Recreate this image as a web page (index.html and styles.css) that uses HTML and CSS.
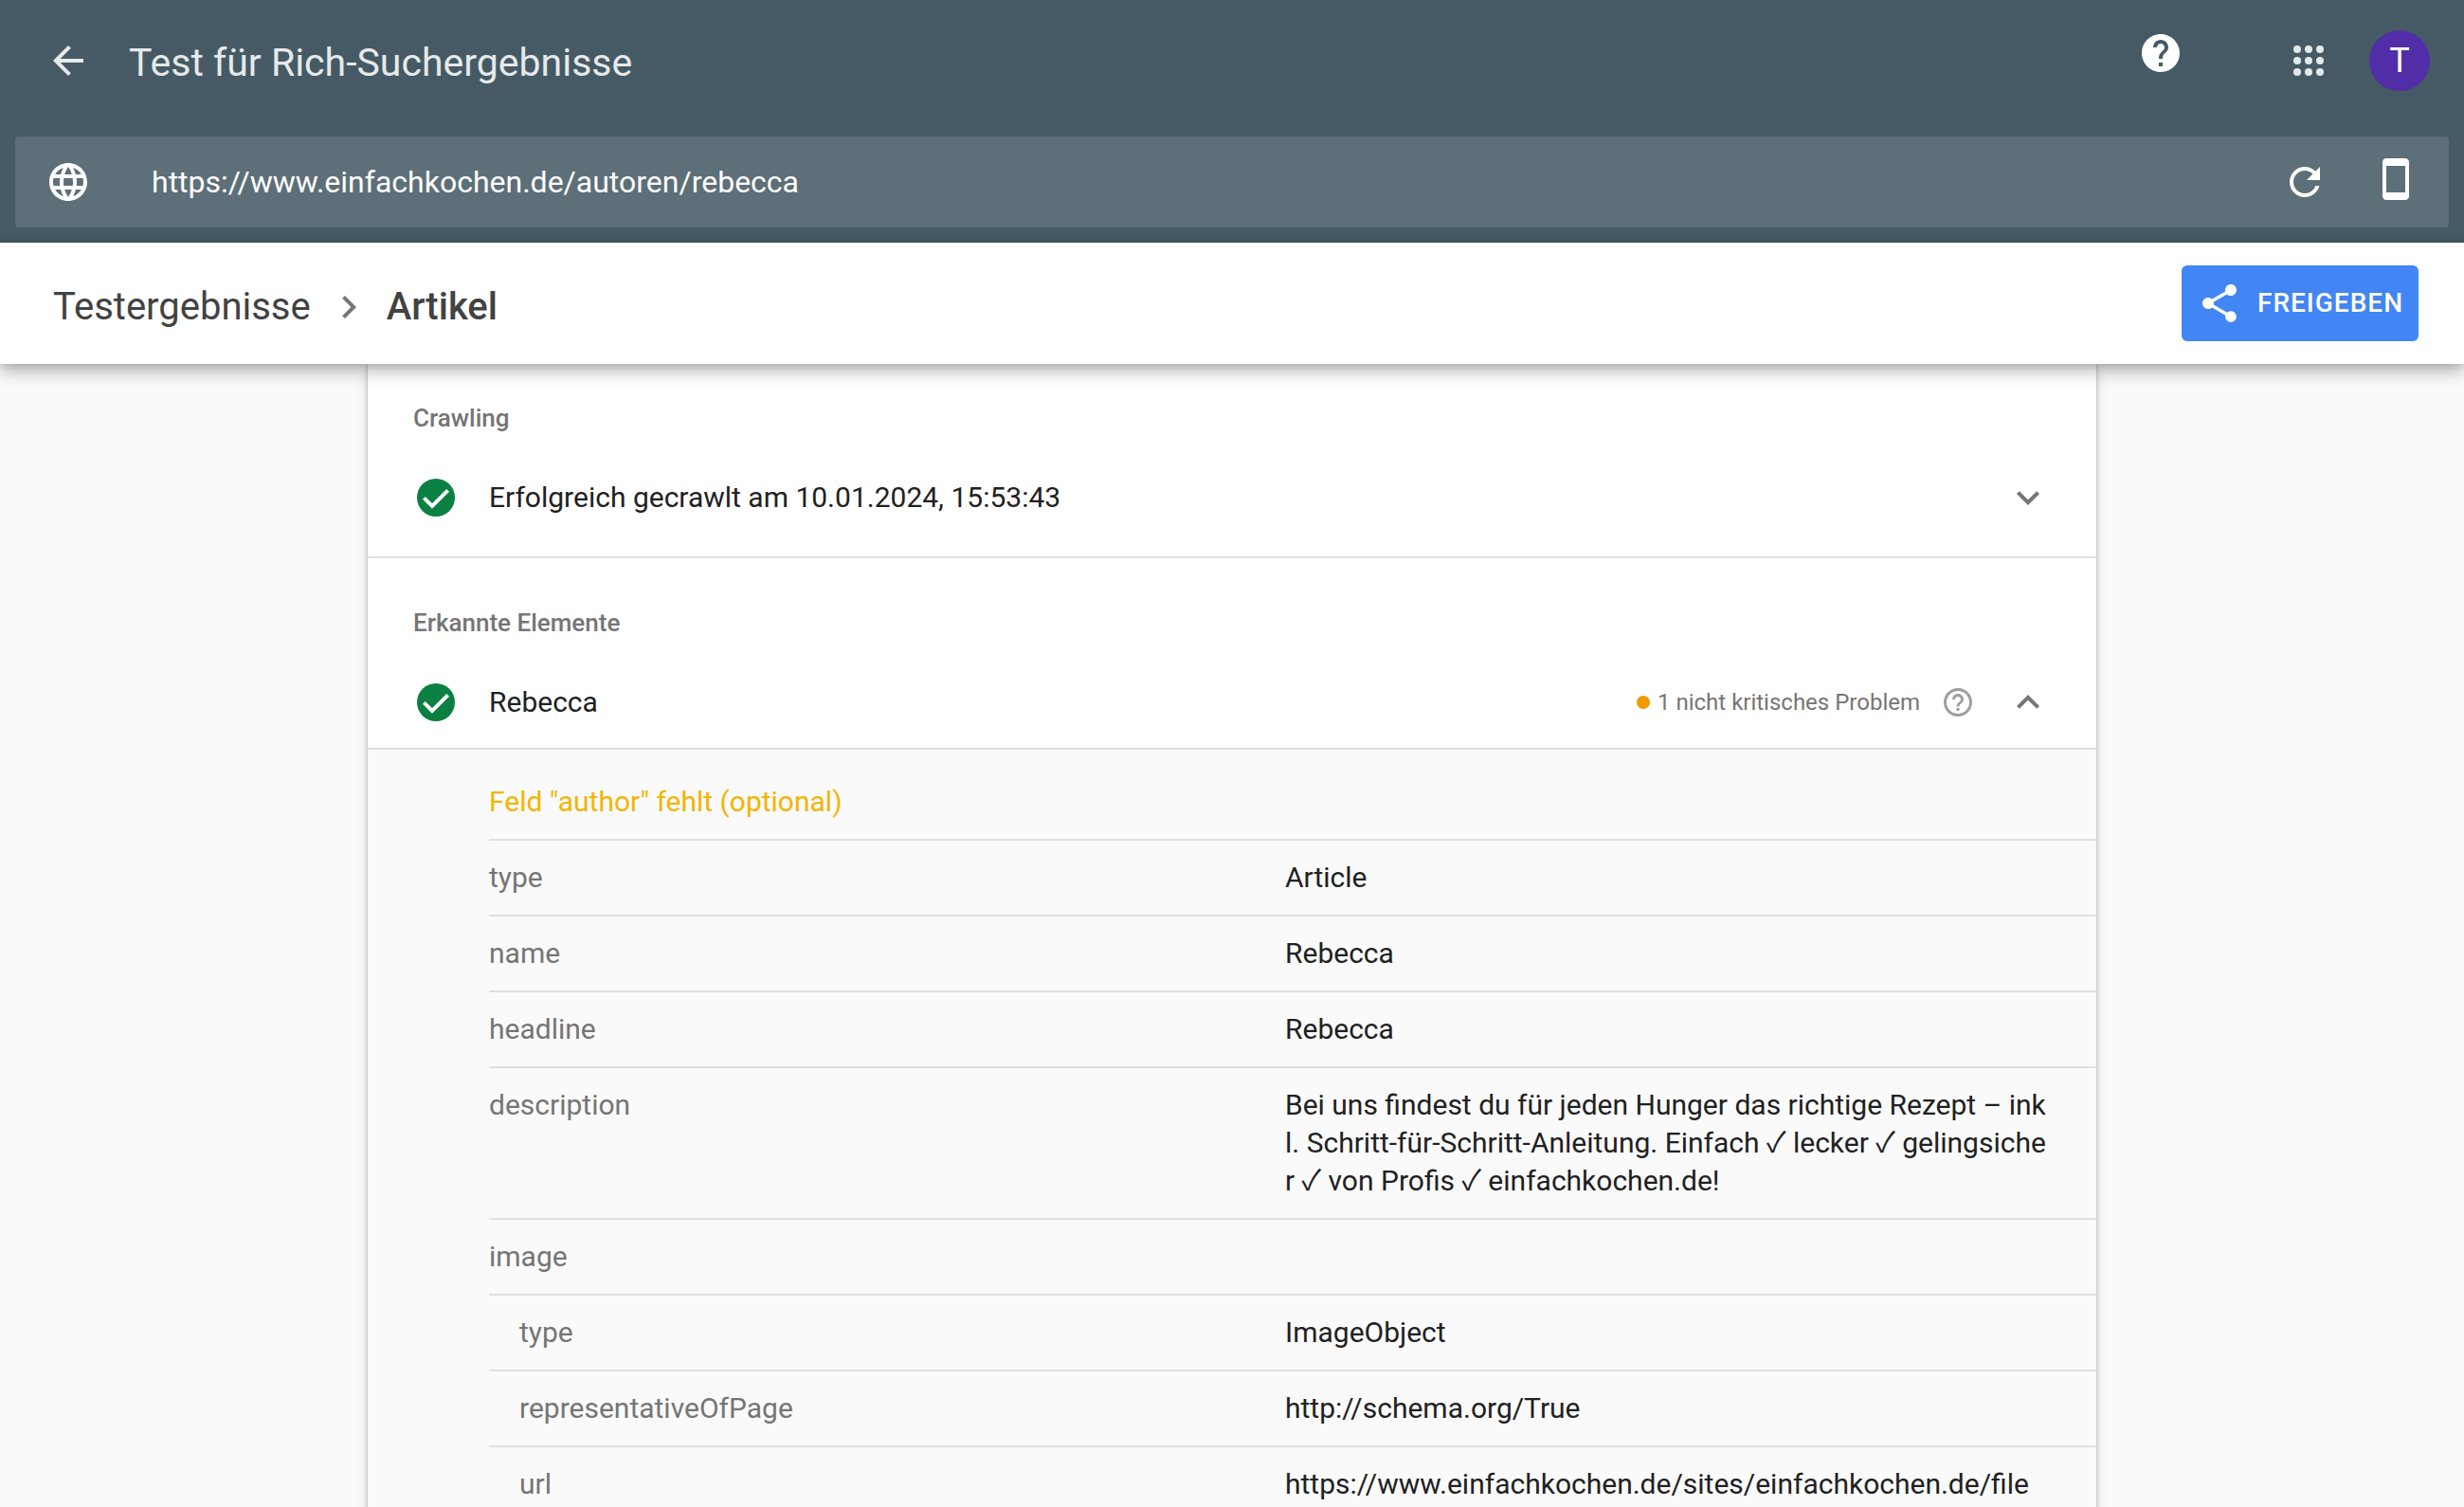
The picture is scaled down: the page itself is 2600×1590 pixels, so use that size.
FILE: index.html
```html
<!DOCTYPE html>
<html lang="de">
<head>
<meta charset="utf-8">
<title>Test für Rich-Suchergebnisse</title>
<link rel="stylesheet" href="styles.css">
</head>
<body>
<div class="app">
  <header class="top">
    <div class="appbar">
      <a class="icon-btn" href="#" aria-label="Zurück">
        <svg class="icon soft" viewBox="0 0 24 24"><path d="M20 11H7.83l5.59-5.59L12 4l-8 8 8 8 1.41-1.41L7.83 13H20v-2z"/></svg>
      </a>
      <h1 class="title">Test für Rich-Suchergebnisse</h1>
      <button class="icon-btn help" type="button" aria-label="Hilfe">
        <svg class="icon" viewBox="0 0 24 24"><path d="M12 2C6.48 2 2 6.48 2 12s4.48 10 10 10 10-4.48 10-10S17.52 2 12 2zm1 17h-2v-2h2v2zm2.07-7.75l-.9.92C13.45 12.9 13 13.5 13 15h-2v-.5c0-1.1.45-2.1 1.17-2.83l1.24-1.26c.37-.36.59-.86.59-1.41 0-1.1-.9-2-2-2s-2 .9-2 2H8c0-2.21 1.79-4 4-4s4 1.79 4 4c0 .88-.36 1.68-.93 2.25z"/></svg>
      </button>
      <button class="icon-btn apps" type="button" aria-label="Google-Apps">
        <svg class="icon soft" viewBox="0 0 24 24"><circle cx="6" cy="6" r="2"/><circle cx="12" cy="6" r="2"/><circle cx="18" cy="6" r="2"/><circle cx="6" cy="12" r="2"/><circle cx="12" cy="12" r="2"/><circle cx="18" cy="12" r="2"/><circle cx="6" cy="18" r="2"/><circle cx="12" cy="18" r="2"/><circle cx="18" cy="18" r="2"/></svg>
      </button>
      <button class="avatar" type="button" aria-label="Konto">T</button>
    </div>
    <form class="urlbar">
      <svg class="icon" viewBox="0 0 24 24"><path d="M11.99 2C6.47 2 2 6.48 2 12s4.47 10 9.99 10C17.52 22 22 17.52 22 12S17.52 2 11.99 2zm6.93 6h-2.95c-.32-1.25-.78-2.45-1.38-3.56 1.84.63 3.37 1.91 4.33 3.56zM12 4.04c.83 1.2 1.48 2.53 1.91 3.96h-3.82c.43-1.43 1.08-2.76 1.91-3.96zM4.26 14C4.1 13.36 4 12.69 4 12s.1-1.36.26-2h3.38c-.08.66-.14 1.32-.14 2s.06 1.34.14 2H4.26zm.82 2h2.95c.32 1.25.78 2.45 1.38 3.56-1.84-.63-3.37-1.9-4.33-3.56zm2.95-8H5.08c.96-1.66 2.49-2.93 4.33-3.56C8.81 5.55 8.35 6.75 8.03 8zM12 19.96c-.83-1.2-1.48-2.53-1.91-3.96h3.82c-.43 1.43-1.08 2.76-1.91 3.96zM14.34 14H9.66c-.09-.66-.16-1.32-.16-2s.07-1.35.16-2h4.68c.09.65.16 1.32.16 2s-.07 1.34-.16 2zm.25 5.56c.6-1.11 1.06-2.31 1.38-3.56h2.95c-.96 1.65-2.49 2.93-4.33 3.56zM16.36 14c.08-.66.14-1.32.14-2s-.06-1.34-.14-2h3.38c.16.64.26 1.31.26 2s-.1 1.36-.26 2h-3.38z"/></svg>
      <input class="url" type="text" aria-label="URL" value="https://www.einfachkochen.de/autoren/rebecca">
      <button class="icon-btn" type="button" aria-label="Neu laden">
        <svg class="icon" viewBox="0 0 24 24"><path d="M17.65 6.35C16.2 4.9 14.21 4 12 4c-4.42 0-7.99 3.58-7.99 8s3.57 8 7.99 8c3.73 0 6.84-2.55 7.73-6h-2.08c-.82 2.33-3.04 4-5.65 4-3.31 0-6-2.69-6-6s2.69-6 6-6c1.66 0 3.14.69 4.22 1.78L13 11h7V4l-2.35 2.35z"/></svg>
      </button>
      <button class="icon-btn device" type="button" aria-label="Smartphone">
        <svg class="icon" viewBox="0 0 24 24"><path d="M17 1.01L7 1c-1.1 0-2 .9-2 2v18c0 1.1.9 2 2 2h10c1.1 0 2-.9 2-2V3c0-1.1-.9-1.99-2-1.99zM17 19H7V5h10v14z"/></svg>
      </button>
    </form>
  </header>

  <nav class="bar">
    <div class="crumbs">
      <a class="crumb" href="#">Testergebnisse</a>
      <svg class="icon grey" viewBox="0 0 24 24"><path d="M10 6L8.59 7.41 13.17 12l-4.58 4.59L10 18l6-6z"/></svg>
      <span class="crumb current">Artikel</span>
    </div>
    <button class="share" type="button">
      <svg class="icon" viewBox="0 0 24 24"><path d="M18 16.08c-.76 0-1.44.3-1.96.77L8.91 12.7c.05-.23.09-.46.09-.7s-.04-.47-.09-.7l7.05-4.11c.54.5 1.25.81 2.04.81 1.66 0 3-1.34 3-3s-1.34-3-3-3-3 1.34-3 3c0 .24.04.47.09.7L8.04 9.81C7.5 9.31 6.79 9 6 9c-1.66 0-3 1.34-3 3s1.34 3 3 3c.79 0 1.5-.31 2.04-.81l7.12 4.16c-.05.21-.08.43-.08.65 0 1.61 1.31 2.92 2.92 2.92 1.61 0 2.92-1.31 2.92-2.92s-1.31-2.92-2.92-2.92z"/></svg>
      Freigeben
    </button>
  </nav>

  <main class="content">
    <article class="card">
      <section class="section crawl">
        <h2 class="label">Crawling</h2>
        <div class="item">
          <svg class="icon green" viewBox="0 0 24 24"><circle cx="12" cy="12" r="10"/><path class="tick" d="M5.7 12.2l4.3 4.3 8.3-8.3"/></svg>
          <span class="name">Erfolgreich gecrawlt am 10.01.2024, 15:53:43</span>
          <button class="icon-btn" type="button" aria-label="Maximieren">
            <svg class="icon grey" viewBox="0 0 24 24"><path d="M7.41 8.59L12 13.17l4.59-4.58L18 10l-6 6-6-6z"/></svg>
          </button>
        </div>
      </section>
      <section class="section">
        <h2 class="label">Erkannte Elemente</h2>
        <div class="item">
          <svg class="icon green" viewBox="0 0 24 24"><circle cx="12" cy="12" r="10"/><path class="tick" d="M5.7 12.2l4.3 4.3 8.3-8.3"/></svg>
          <span class="name">Rebecca</span>
          <span class="issue"><span class="dot"></span>1 nicht kritisches Problem</span>
          <button class="icon-btn info" type="button" aria-label="Info">
            <svg class="icon-small" viewBox="0 0 24 24"><path d="M11 18h2v-2h-2v2zm1-16C6.48 2 2 6.48 2 12s4.48 10 10 10 10-4.48 10-10S17.52 2 12 2zm0 18c-4.41 0-8-3.59-8-8s3.59-8 8-8 8 3.59 8 8-3.59 8-8 8zm0-14c-2.21 0-4 1.79-4 4h2c0-1.1.9-2 2-2s2 .9 2 2c0 2-3 1.75-3 5h2c0-2.25 3-2.5 3-5 0-2.21-1.79-4-4-4z"/></svg>
          </button>
          <button class="icon-btn" type="button" aria-label="Minimieren">
            <svg class="icon grey" viewBox="0 0 24 24"><path d="M12 8l-6 6 1.41 1.41L12 10.83l4.59 4.58L18 14z"/></svg>
          </button>
        </div>
      </section>
      <div class="details">
        <table class="props">
          <colgroup><col class="col-key"><col></colgroup>
          <tbody>
            <tr><td class="warning" colspan="2">Feld "author" fehlt (optional)</td></tr>
            <tr><th>type</th><td>Article</td></tr>
            <tr><th>name</th><td>Rebecca</td></tr>
            <tr><th>headline</th><td>Rebecca</td></tr>
            <tr><th>description</th><td>Bei uns findest du für jeden Hunger das richtige Rezept – inkl. Schritt-für-Schritt-Anleitung. Einfach ✓ lecker ✓ gelingsicher ✓ von Profis ✓ einfachkochen.de!</td></tr>
            <tr><th>image</th><td></td></tr>
            <tr class="nested"><th>type</th><td>ImageObject</td></tr>
            <tr class="nested"><th>representativeOfPage</th><td>http://schema.org/True</td></tr>
            <tr class="nested"><th>url</th><td>https://www.einfachkochen.de/sites/einfachkochen.de/file</td></tr>
          </tbody>
        </table>
      </div>
    </article>
  </main>
</div>
</body>
</html>
```
FILE: styles.css
```css
* {
  box-sizing: border-box;
}

body {
  margin: 0;
  background: #fafafa;
  color: #212121;
  font-family: Roboto, "Noto Sans CJK JP", sans-serif;
  font-size: 30px;
  line-height: 40px;
}

button,
input {
  margin: 0;
  padding: 0;
  border: 0;
  background: none;
  color: inherit;
  font: inherit;
}

.app {
  display: flex;
  flex-direction: column;
  height: 100vh;
  overflow: hidden;
}

.icon {
  display: block;
  flex: none;
  width: 48px;
  height: 48px;
  fill: currentColor;
}

.icon-small {
  display: block;
  width: 36px;
  height: 36px;
  fill: #9e9e9e;
}

.icon-btn {
  flex: none;
  color: inherit;
}

.soft {
  fill: #e6e9ea;
}

.grey {
  fill: #757575;
}

.green {
  fill: #0b8043;
}

.tick {
  fill: none;
  stroke: #fff;
  stroke-width: 2;
}

/* Header */

.top {
  flex: none;
  padding: 0 16px 16px;
  background: #455a64;
  color: #fff;
}

.appbar {
  display: flex;
  align-items: center;
  height: 128px;
  padding: 0 20px 0 32px;
}

.title {
  flex: 1;
  margin: 0 0 0 40px;
  padding-top: 4px;
  color: #e6e9ea;
  font-size: 41px;
  font-weight: 400;
  line-height: 48px;
}

.help {
  padding-bottom: 16px;
}

.apps {
  margin: 0 40px 0 108px;
}

.avatar {
  width: 64px;
  height: 64px;
  border-radius: 50%;
  background: #512da8;
  font-size: 36px;
}

.urlbar {
  display: flex;
  align-items: center;
  height: 96px;
  margin-top: 16px;
  padding: 0 32px;
  border-radius: 4px;
  background: #5d6f78;
}

.url {
  flex: 1;
  min-width: 0;
  margin-left: 64px;
  font-size: 32px;
}

.device {
  margin-left: 48px;
  padding-bottom: 6px;
}

/* Breadcrumbs */

.bar {
  z-index: 1;
  display: flex;
  flex: none;
  align-items: center;
  justify-content: space-between;
  height: 128px;
  padding: 0 48px 0 56px;
  background: #fff;
  box-shadow: 0 0 8px rgba(0, 0, 0, 0.14), 0 8px 16px rgba(0, 0, 0, 0.28);
}

.crumbs {
  display: flex;
  align-items: center;
  gap: 16px;
  padding-top: 8px;
  color: #424242;
  font-size: 40px;
  line-height: 48px;
}

.crumb {
  color: inherit;
  text-decoration: none;
}

.current {
  font-weight: 500;
}

.share {
  display: flex;
  align-items: center;
  gap: 16px;
  height: 80px;
  padding: 0 16px;
  border-radius: 6px;
  background: #4285f4;
  color: #fff;
  font-size: 28px;
  font-weight: 500;
  letter-spacing: 1px;
  text-transform: uppercase;
}

/* Result card */

.content {
  flex: 1;
  min-height: 0;
}

.card {
  width: 100%;
  max-width: 1824px;
  min-height: 100%;
  margin: 0 auto;
  background: #fff;
  box-shadow: 0 0 4px rgba(0, 0, 0, 0.24), 0 4px 12px rgba(0, 0, 0, 0.16);
}

.section {
  padding: 48px 48px 0;
  border-bottom: 2px solid #e0e0e0;
}

.crawl {
  padding: 37px 48px 14px;
}

.label {
  margin: 0 0 16px;
  color: #757575;
  font-size: 26px;
  font-weight: 500;
  line-height: 40px;
}

.item {
  display: flex;
  align-items: center;
  height: 96px;
}

.name {
  flex: 1;
  margin-left: 32px;
}

.issue {
  display: flex;
  align-items: center;
  color: #757575;
  font-size: 24px;
}

.dot {
  width: 14px;
  height: 14px;
  margin-right: 8px;
  border-radius: 50%;
  background: #f29900;
}

.info {
  margin: 0 32px 0 22px;
}

.details {
  padding: 16px 0 0 128px;
  background: #fafafa;
}

.props {
  width: 100%;
  border-collapse: separate;
  border-spacing: 0;
  table-layout: fixed;
}

.col-key {
  width: 840px;
}

.props th,
.props td {
  height: 80px;
  padding: 19px 48px 19px 0;
  border-bottom: 2px solid #e0e0e0;
  font-weight: 400;
  text-align: left;
  vertical-align: top;
  word-break: break-all;
}

.props th {
  color: #757575;
}

.props .nested th {
  padding-left: 32px;
}

.props .warning {
  color: #f4b400;
}
```
